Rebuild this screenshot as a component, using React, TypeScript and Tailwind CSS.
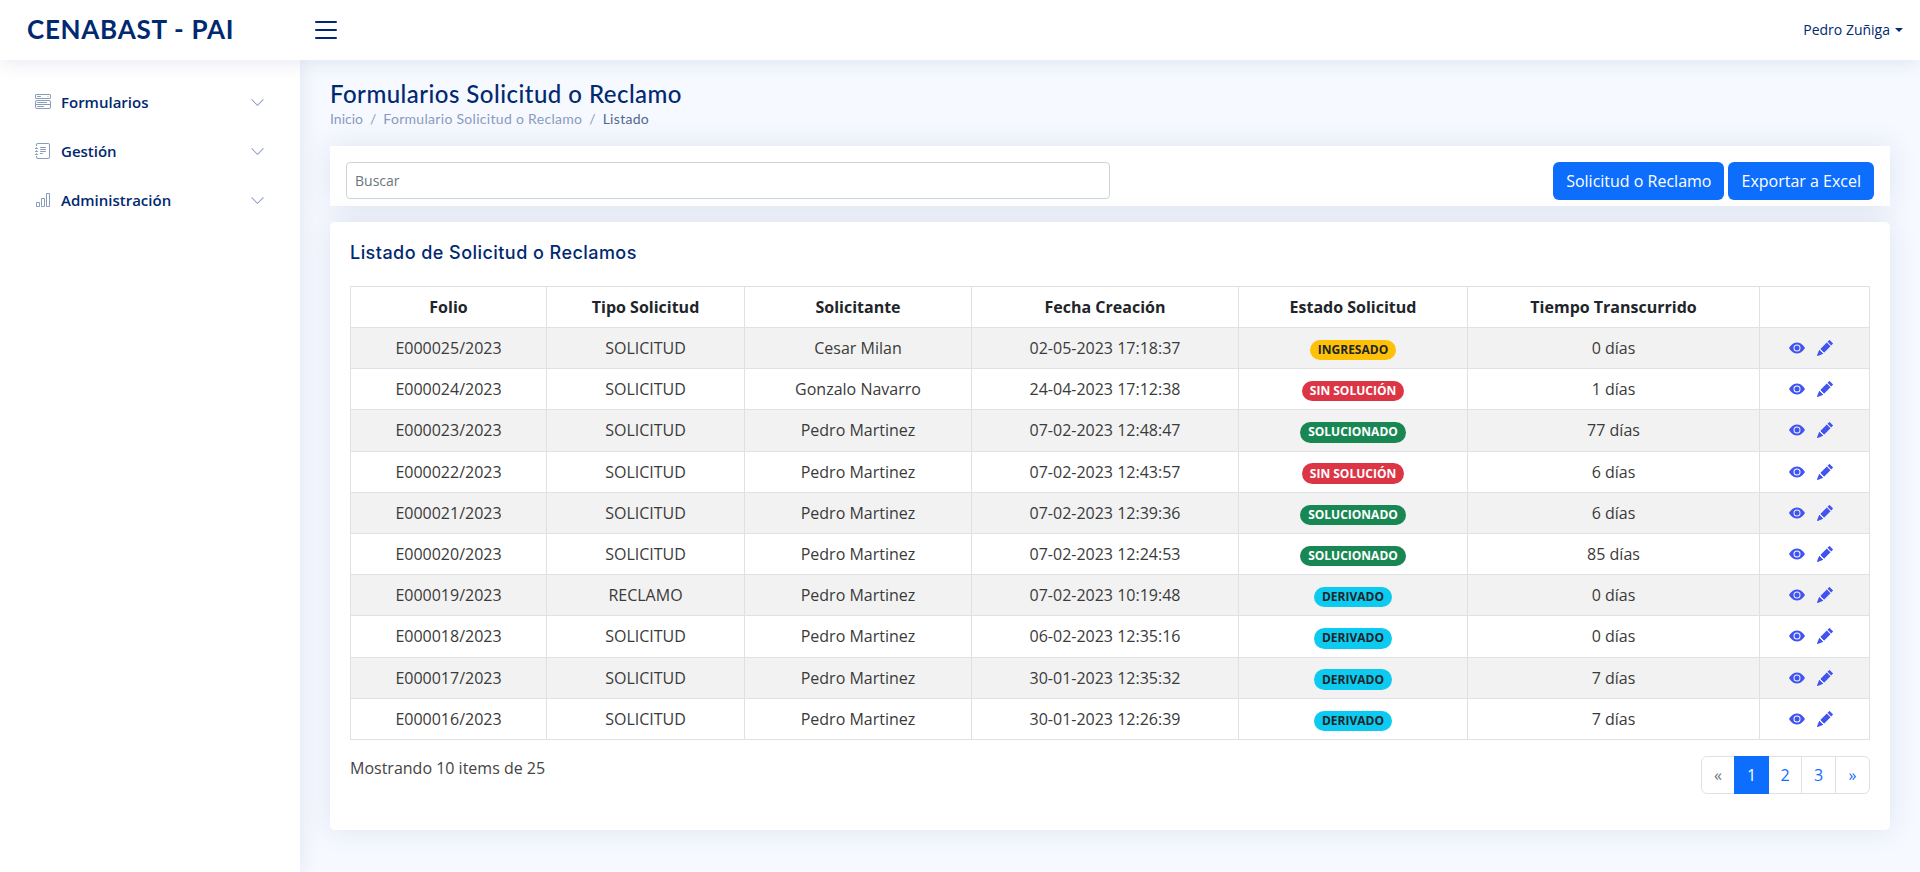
import React from "react";
import {
  BsBarChart,
  BsChevronDown,
  BsEyeFill,
  BsJournalText,
  BsList,
  BsMenuButtonWide,
  BsPencilFill,
} from "react-icons/bs";

type Estado = "INGRESADO" | "SIN SOLUCIÓN" | "SOLUCIONADO" | "DERIVADO";

interface Solicitud {
  folio: string;
  tipo: string;
  solicitante: string;
  fecha: string;
  estado: Estado;
  tiempo: string;
}

const rows: Solicitud[] = [
  { folio: "E000025/2023", tipo: "SOLICITUD", solicitante: "Cesar Milan", fecha: "02-05-2023 17:18:37", estado: "INGRESADO", tiempo: "0 días" },
  { folio: "E000024/2023", tipo: "SOLICITUD", solicitante: "Gonzalo Navarro", fecha: "24-04-2023 17:12:38", estado: "SIN SOLUCIÓN", tiempo: "1 días" },
  { folio: "E000023/2023", tipo: "SOLICITUD", solicitante: "Pedro Martinez", fecha: "07-02-2023 12:48:47", estado: "SOLUCIONADO", tiempo: "77 días" },
  { folio: "E000022/2023", tipo: "SOLICITUD", solicitante: "Pedro Martinez", fecha: "07-02-2023 12:43:57", estado: "SIN SOLUCIÓN", tiempo: "6 días" },
  { folio: "E000021/2023", tipo: "SOLICITUD", solicitante: "Pedro Martinez", fecha: "07-02-2023 12:39:36", estado: "SOLUCIONADO", tiempo: "6 días" },
  { folio: "E000020/2023", tipo: "SOLICITUD", solicitante: "Pedro Martinez", fecha: "07-02-2023 12:24:53", estado: "SOLUCIONADO", tiempo: "85 días" },
  { folio: "E000019/2023", tipo: "RECLAMO", solicitante: "Pedro Martinez", fecha: "07-02-2023 10:19:48", estado: "DERIVADO", tiempo: "0 días" },
  { folio: "E000018/2023", tipo: "SOLICITUD", solicitante: "Pedro Martinez", fecha: "06-02-2023 12:35:16", estado: "DERIVADO", tiempo: "0 días" },
  { folio: "E000017/2023", tipo: "SOLICITUD", solicitante: "Pedro Martinez", fecha: "30-01-2023 12:35:32", estado: "DERIVADO", tiempo: "7 días" },
  { folio: "E000016/2023", tipo: "SOLICITUD", solicitante: "Pedro Martinez", fecha: "30-01-2023 12:26:39", estado: "DERIVADO", tiempo: "7 días" },
];

const badgeClass: Record<Estado, string> = {
  INGRESADO: "bg-[#ffc107] text-[#212529]",
  "SIN SOLUCIÓN": "bg-[#dc3545] text-white",
  SOLUCIONADO: "bg-[#198754] text-white",
  DERIVADO: "bg-[#0dcaf0] text-[#212529]",
};

const sideLinks = [
  { label: "Formularios", Icon: BsMenuButtonWide },
  { label: "Gestión", Icon: BsJournalText },
  { label: "Administración", Icon: BsBarChart },
];

const headers = ["Folio", "Tipo Solicitud", "Solicitante", "Fecha Creación", "Estado Solicitud", "Tiempo Transcurrido", ""];

const pages = [
  { label: "«", width: "w-[34px]" },
  { label: "1", width: "w-[35px]" },
  { label: "2", width: "w-[34px]" },
  { label: "3", width: "w-[35px]" },
  { label: "»", width: "w-[35px]" },
];

const cell = "border border-[#dee2e6] px-2 py-2 text-center font-normal text-[#3a3a3a]";

function Header() {
  return (
    <header className="relative z-20 flex h-[60px] items-center bg-white pr-[17px] shadow-[0_2px_20px_rgba(1,41,112,0.1)]">
      <div className="w-[310px] pb-[2px] pl-[27px] font-['Lato',sans-serif] text-[26px] font-bold tracking-[0.72px] text-[#012970]">
        CENABAST - PAI
      </div>
      <BsList size={32} className="text-[#012970]" />
      <div className="ml-auto flex items-center text-sm font-medium text-[#012970]">
        Pedro Zuñiga
        <span className="ml-[5px] border-x-[4px] border-t-[4px] border-x-transparent border-t-[#012970]" />
      </div>
    </header>
  );
}

function Sidebar() {
  return (
    <aside className="relative z-10 w-[300px] shrink-0 bg-white p-5 shadow-[0_0_20px_rgba(1,41,112,0.1)]">
      <ul className="flex flex-col gap-[5px]">
        {sideLinks.map(({ label, Icon }) => (
          <li key={label} className="flex h-11 items-center pl-[15px] pr-[15px] text-[15px] font-semibold text-[#012970]">
            <Icon size={16} className="mr-[10px] text-[#899bbd]" />
            {label}
            <BsChevronDown size={15} className="ml-auto text-[#899bbd]" />
          </li>
        ))}
      </ul>
    </aside>
  );
}

function Table() {
  return (
    <table className="w-[1519px] table-fixed border-collapse text-[#212529]">
      <colgroup>
        <col className="w-[196px]" />
        <col className="w-[198px]" />
        <col className="w-[227px]" />
        <col className="w-[267px]" />
        <col className="w-[229px]" />
        <col className="w-[292px]" />
        <col className="w-[110px]" />
      </colgroup>
      <thead>
        <tr>
          {headers.map((h, i) => (
            <th key={i} className="border border-[#dee2e6] px-2 py-2 text-center font-bold">
              {h}
            </th>
          ))}
        </tr>
      </thead>
      <tbody>
        {rows.map((r, i) => (
          <tr key={r.folio} className={i % 2 === 0 ? "bg-[#f2f2f2]" : ""}>
            <td className={cell}>{r.folio}</td>
            <td className={cell}>{r.tipo}</td>
            <td className={cell}>{r.solicitante}</td>
            <td className={cell}>{r.fecha}</td>
            <td className={cell}>
              <span className={`inline-block rounded-full px-[7.8px] py-[4.2px] text-xs leading-none font-bold ${badgeClass[r.estado]}`}>
                {r.estado}
              </span>
            </td>
            <td className={cell}>{r.tiempo}</td>
            <td className={cell}>
              <div className="flex items-center justify-center gap-3 pr-[8px] text-[#4154f1]">
                <BsEyeFill size={16} />
                <BsPencilFill size={16} />
              </div>
            </td>
          </tr>
        ))}
      </tbody>
    </table>
  );
}

function Pagination() {
  return (
    <ul className="flex h-[38px]">
      {pages.map((p, i) => (
        <li
          key={p.label}
          className={`-ml-px flex items-center justify-center border first:ml-0 first:rounded-l-md last:rounded-r-md ${p.width} ${
            p.label === "1" ? "z-10 border-[#0d6efd] bg-[#0d6efd] text-white" : i === 0 ? "border-[#dee2e6] text-[#6c757d]" : "border-[#dee2e6] text-[#0d6efd]"
          }`}
        >
          {p.label}
        </li>
      ))}
    </ul>
  );
}

export default function App() {
  return (
    <div className="flex h-[872px] flex-col overflow-hidden bg-[#f6f9ff] font-['Open_Sans',sans-serif] text-[#444444]">
      <Header />
      <div className="flex flex-1">
        <Sidebar />
        <main className="min-w-0 flex-1 px-[30px] pt-[19px]">
          <div className="mb-[17px]">
            <h1 className="font-['Lato',sans-serif] text-2xl leading-[29px] font-medium tracking-[0.47px] text-[#012970]">Formularios Solicitud o Reclamo</h1>
            <nav className="flex font-['Lato',sans-serif] text-sm leading-[21px] text-[#899bbd]">
              <span>Inicio</span>
              <span className="px-[7px]">/</span>
              <span className="tracking-[0.3px]">Formulario Solicitud o Reclamo</span>
              <span className="px-[7px]">/</span>
              <span className="tracking-[0.3px] text-[#51678f]">Listado</span>
            </nav>
          </div>
          <section className="mb-4 flex h-[60px] items-start justify-between bg-white px-4 pt-4 shadow-[0_0_30px_rgba(1,41,112,0.1)]">
            <input
              placeholder="Buscar"
              className="h-[37px] w-[764px] rounded border border-[#ced4da] px-2 text-sm outline-none placeholder:text-[#6c757d]"
            />
            <div className="flex gap-1">
              <button className="h-[38px] rounded-md bg-[#0d6efd] px-[13px] text-white">Solicitud o Reclamo</button>
              <button className="h-[38px] rounded-md bg-[#0d6efd] px-[13px] text-white">Exportar a Excel</button>
            </div>
          </section>
          <section className="h-[608px] rounded-[5px] bg-white px-5 shadow-[0_0_30px_rgba(1,41,112,0.1)]">
            <h5 className="pt-5 pb-[15px] font-['Inter',sans-serif] text-lg leading-[22px] font-medium tracking-[0.45px] text-[#012970]">Listado de Solicitud o Reclamos</h5>
            <div className="pt-[7px]">
              <Table />
            </div>
            <div className="mt-[16px] flex items-start justify-between">
              <span>Mostrando 10 items de 25</span>
              <Pagination />
            </div>
          </section>
        </main>
      </div>
    </div>
  );
}
